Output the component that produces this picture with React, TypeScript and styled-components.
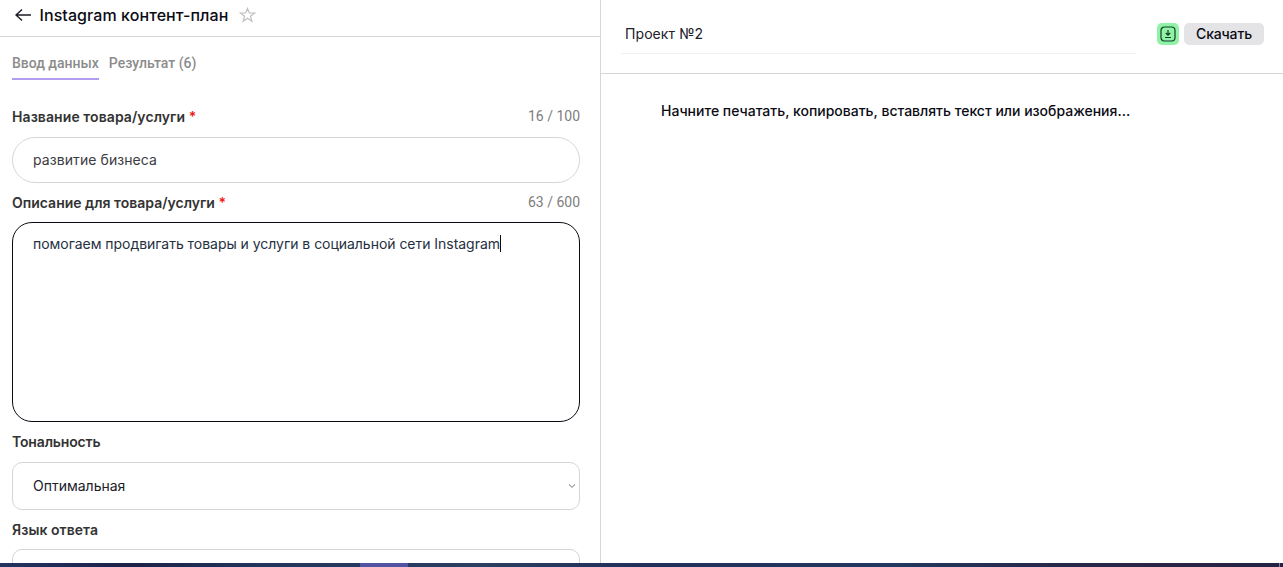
import React from 'react';
import styled, { createGlobalStyle } from 'styled-components';

const GlobalStyle = createGlobalStyle`
  * { box-sizing: border-box; }
  html, body { margin: 0; padding: 0; overflow: hidden; background: #fff; }
  body { font-family: Inter, 'Noto Sans', sans-serif; font-size: 14px; color: #0b0b14; }
`;

const Screen = styled.div`
  height: 567px;
  display: flex;
  flex-direction: column;
  overflow: hidden;
`;

const Workspace = styled.main`
  flex: 1;
  min-height: 0;
  display: grid;
  grid-template-columns: 601px 1fr;
  overflow: hidden;
`;

const FormPanel = styled.section`
  border-right: 1px solid #d6d6d6;
  min-height: 0;
  overflow: hidden;
`;

const TitleBar = styled.header`
  height: 37px;
  padding: 0 15px 6px;
  display: flex;
  align-items: center;
  border-bottom: 1px solid #d6d6d6;
`;

const Title = styled.h1`
  margin: 0 11px 0 7.5px;
  font-size: 16px;
  line-height: 20px;
  font-weight: 500;
  letter-spacing: 0.08px;
  white-space: nowrap;
`;

const Tabs = styled.nav`
  display: flex;
  gap: 10px;
  padding: 16px 12px 0;
`;

const Tab = styled.span<{ $active?: boolean }>`
  height: 27px;
  font: 500 14px/20px Roboto, sans-serif;
  color: #8c8c8c;
  white-space: nowrap;
  border-bottom: 2px solid ${(p) => (p.$active ? '#b39df0' : 'transparent')};
`;

const Form = styled.div`
  padding: 27px 20px 0 12px;
`;

const FieldHead = styled.div<{ $height: number; $gap?: number }>`
  height: ${(p) => p.$height}px;
  padding-bottom: ${(p) => p.$gap ?? 10}px;
  display: flex;
  justify-content: space-between;
  align-items: flex-end;
`;

const Label = styled.label<{ $spacing?: number }>`
  font-size: 14px;
  line-height: 20px;
  font-weight: 600;
  letter-spacing: ${(p) => p.$spacing ?? 0}px;
  color: #333;
  white-space: nowrap;
`;

const Required = styled.span`
  color: #f01818;
`;

const Counter = styled.span`
  padding-bottom: 2px;
  font: 400 14px/18px Roboto, sans-serif;
  color: #7d7d7d;
`;

const Field = styled.div<{ $height: number; $radius: number; $focused?: boolean; $spacing?: number }>`
  height: ${(p) => p.$height}px;
  padding: ${(p) => (p.$focused ? '11px' : '0')} 3px 0 20px;
  display: flex;
  align-items: ${(p) => (p.$focused ? 'flex-start' : 'center')};
  border: 1px solid ${(p) => (p.$focused ? '#0a0a14' : '#d6d6d6')};
  border-radius: ${(p) => p.$radius}px;
  line-height: 20px;
  letter-spacing: ${(p) => p.$spacing ?? 0}px;
  color: ${(p) => (p.$focused ? '#26303f' : '#3b3b42')};
  white-space: nowrap;
`;

const SelectValue = styled.span`
  flex: 1;
  color: #20202a;
`;

const Caret = styled.span`
  width: 1px;
  height: 17px;
  margin-top: 1px;
  background: #0a0a14;
`;

const EditorPanel = styled.section`
  min-width: 0;
`;

const EditorBar = styled.header`
  height: 74px;
  padding: 15px 19px 0 20px;
  display: flex;
  align-items: flex-start;
  border-bottom: 1px solid #d6d6d6;
`;

const ProjectName = styled.div`
  width: 515px;
  height: 39px;
  margin-right: 21px;
  padding: 9px 4px 0;
  line-height: 20px;
  letter-spacing: 0.08px;
  color: #20202a;
  border-bottom: 1px solid #f0f0f0;
`;

const SaveButton = styled.button`
  width: 22px;
  height: 22px;
  margin: 8px 5px 0 0;
  padding: 0;
  display: grid;
  place-items: center;
  border: 0;
  border-radius: 5px;
  background: #90f2a6;
`;

const DownloadButton = styled.button`
  width: 80px;
  height: 22px;
  margin-top: 8px;
  padding: 0;
  border: 0;
  border-radius: 5px;
  background: #e4e4e7;
  color: #0b0b14;
  font: 500 14px/22px Inter, 'Noto Sans', sans-serif;
  letter-spacing: -0.15px;
`;

const Placeholder = styled.p`
  margin: 27px 0 0 60px;
  line-height: 20px;
  font-weight: 500;
  white-space: nowrap;
`;

const Taskbar = styled.footer`
  height: 4px;
  display: flex;
  padding-left: 360px;
  background: linear-gradient(90deg, #233461 0, #1b2149 130px, #22355c 260px, #2a3f62 480px, #22305a 640px, #22385f 900px, #262a4c 1030px, #2a2445 1180px, #222343 100%);
`;

const ActiveTask = styled.span`
  width: 48px;
  background: #5253a3;
`;

const DesktopEdge = styled.span`
  width: 1px;
  margin: 0 3px 0 auto;
  background: #80829a;
`;

function BackArrow() {
  return (
    <svg width="17" height="14" viewBox="0 0 17 14" fill="none" stroke="#1c1c28" strokeWidth="1.4">
      <path d="M16 7H1M7 1.5L1 7L7 12.5" />
    </svg>
  );
}

function Star() {
  return (
    <svg width="17" height="16" viewBox="0 0 17 16" fill="none" stroke="#c0c0c4" strokeWidth="1.2">
      <path d="M8.5 1.4L10.4 6H15.6L11.4 9.2L12.9 14.3L8.5 11.3L4.1 14.3L5.6 9.2L1.4 6H6.6Z" />
    </svg>
  );
}

function SaveIcon() {
  return (
    <svg width="16" height="16" viewBox="0 0 16 16" fill="none" stroke="#153d26">
      <rect x="1" y="1" width="14" height="14" rx="3.5" strokeWidth="1.2" />
      <path d="M8 4V9M5.8 7L8 9.2L10.2 7M5 11.5H11" strokeWidth="1.2" />
    </svg>
  );
}

function Chevron() {
  return (
    <svg width="8" height="6" viewBox="0 0 8 6" fill="none" stroke="#999" strokeWidth="1.1">
      <path d="M1 1.3L4 4.3L7 1.3" />
    </svg>
  );
}

export default function App() {
  return (
    <Screen>
      <GlobalStyle />
      <Workspace>
        <FormPanel>
          <TitleBar>
            <BackArrow />
            <Title>Instagram контент-план</Title>
            <Star />
          </TitleBar>
          <Tabs>
            <Tab $active>Ввод данных</Tab>
            <Tab>Результат (6)</Tab>
          </Tabs>
          <Form>
            <FieldHead $height={30}>
              <Label $spacing={0.08}>Название товара/услуги <Required>*</Required></Label>
              <Counter>16 / 100</Counter>
            </FieldHead>
            <Field $height={46} $radius={23} $spacing={0.08}>развитие бизнеса</Field>
            <FieldHead $height={39} $gap={9}>
              <Label>Описание для товара/услуги <Required>*</Required></Label>
              <Counter>63 / 600</Counter>
            </FieldHead>
            <Field $height={200} $radius={20} $focused $spacing={-0.035}>
              помогаем продвигать товары и услуги в социальной сети Instagram<Caret />
            </Field>
            <FieldHead $height={40}>
              <Label $spacing={-0.15}>Тональность</Label>
            </FieldHead>
            <Field $height={48} $radius={10}>
              <SelectValue>Оптимальная</SelectValue>
              <Chevron />
            </Field>
            <FieldHead $height={39} $gap={9}>
              <Label $spacing={0.05}>Язык ответа</Label>
            </FieldHead>
            <Field $height={48} $radius={10} />
          </Form>
        </FormPanel>
        <EditorPanel>
          <EditorBar>
            <ProjectName>Проект №2</ProjectName>
            <SaveButton aria-label="Сохранить"><SaveIcon /></SaveButton>
            <DownloadButton>Скачать</DownloadButton>
          </EditorBar>
          <Placeholder>Начните печатать, копировать, вставлять текст или изображения...</Placeholder>
        </EditorPanel>
      </Workspace>
      <Taskbar>
        <ActiveTask />
        <DesktopEdge />
      </Taskbar>
    </Screen>
  );
}
